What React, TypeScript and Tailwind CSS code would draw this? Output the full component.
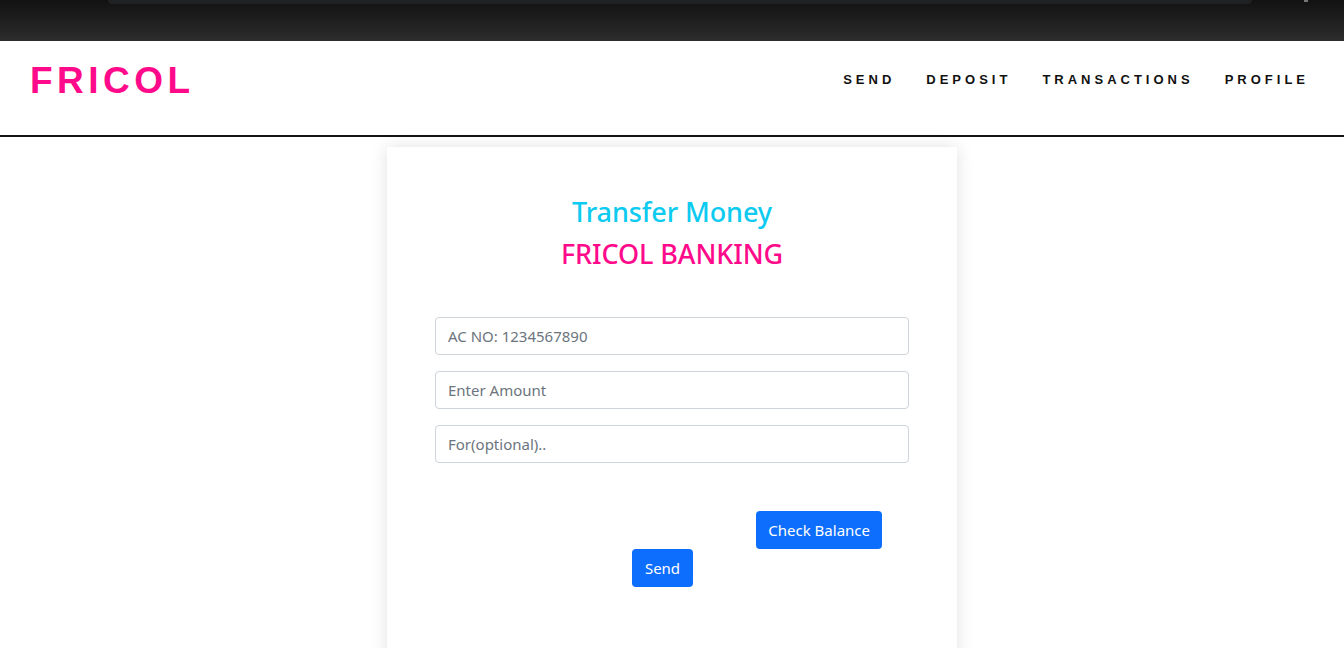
export default function App() {
  const links = ['SEND', 'DEPOSIT', 'TRANSACTIONS', 'PROFILE'];

  return (
    <div className="min-h-[648px] bg-white font-['Open_Sans',sans-serif]">
      {/* browser chrome strip */}
      <div className="h-[41px] bg-gradient-to-b from-[#121212] to-[#2d2d2d] pl-[108px] flex">
        <div className="w-[1144px] h-[4px] bg-[#202124] rounded-b-[6px]" />
        <div className="ml-[52px] mt-[0px] w-[4px] h-[2px] bg-[#777]" />
      </div>

      <nav className="h-[96px] border-b-2 border-[#141414] flex items-start justify-between pl-[30px] pr-[35px]">
        <div className="mt-[19px] text-[37px] leading-[42px] font-bold tracking-[4.5px] text-[#ff0a8a] font-['Liberation_Sans',sans-serif]">
          FRICOL
        </div>
        <ul className="flex gap-[31px] mt-[31px]">
          {links.map((l) => (
            <li key={l} className="text-[13px] leading-[16px] font-bold tracking-[4px] text-[#111] font-['Liberation_Sans',sans-serif]">
              {l}
            </li>
          ))}
        </ul>
      </nav>

      <div className="flex justify-center pt-[10px]">
        <div className="w-[570px] h-[520px] bg-white shadow-[0_0_16px_rgba(0,0,0,0.12)] px-[48px] pt-[46px]">
          <h2 className="text-center text-[27px] leading-[38px] font-medium text-[#0dcaf0] font-['Noto_Sans',sans-serif] tracking-[-0.1px]">
            Transfer Money
          </h2>
          <h2 className="text-center text-[27px] leading-[46px] font-medium text-[#ff0a8a] font-['Noto_Sans',sans-serif] tracking-[-0.1px]">
            FRICOL BANKING
          </h2>

          <div className="flex flex-col gap-[16px] mt-[40px]">
            {['AC NO: 1234567890', 'Enter Amount', 'For(optional)..'].map((p) => (
              <input
                key={p}
                placeholder={p}
                className="h-[38px] w-full border border-[#ced4da] rounded-[4px] px-[12px] text-[15px] placeholder:text-[#6c757d] font-['Noto_Sans',sans-serif] outline-none"
              />
            ))}
          </div>

          <div className="flex justify-end pr-[27px] mt-[48px]">
            <button className="h-[38px] px-[12px] rounded-[4px] bg-[#0d6efd] text-white text-[15px] font-['Noto_Sans',sans-serif]">
              Check Balance
            </button>
          </div>
          <div className="flex pl-[197px]">
            <button className="h-[38px] w-[61px] rounded-[4px] bg-[#0d6efd] text-white text-[15px] font-['Noto_Sans',sans-serif]">
              Send
            </button>
          </div>
        </div>
      </div>
    </div>
  );
}
